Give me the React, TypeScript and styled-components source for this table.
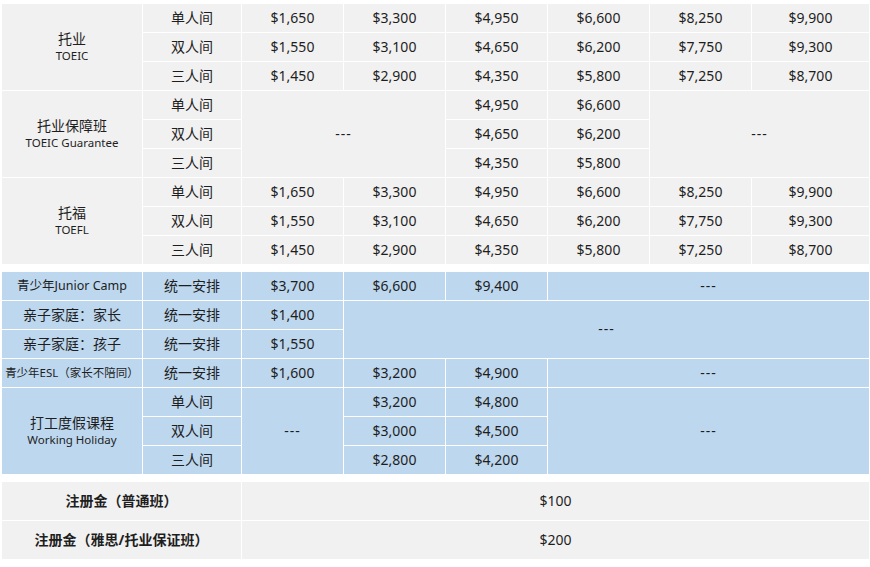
import React from "react";
import styled, { createGlobalStyle } from "styled-components";

const Global = createGlobalStyle`
  html, body { margin: 0; padding: 0; background: #ffffff; }
  body {
    font-family: "Segoe UI", "Noto Sans", "Noto Sans CJK SC", sans-serif;
    color: #1e1e1e;
  }
`;

const Page = styled.div`
  padding: 4px 1px 0 2px;
  display: flex;
  flex-direction: column;
  gap: 8px;
  width: 867px;
`;

const Table = styled.div<{ $cols: string; $rowH: number }>`
  display: grid;
  grid-template-columns: ${(p) => p.$cols};
  grid-auto-rows: ${(p) => p.$rowH}px;
  gap: 1px;
  background: #ffffff;
`;

type Tone = "gray" | "blue";

const Cell = styled.div<{ $tone: Tone; $cs?: number; $rs?: number; $bold?: boolean; $size?: number }>`
  grid-column: span ${(p) => p.$cs ?? 1};
  grid-row: span ${(p) => p.$rs ?? 1};
  background: ${(p) => (p.$tone === "gray" ? "#f1f1f1" : "#bdd7ee")};
  display: flex;
  flex-direction: column;
  align-items: center;
  justify-content: center;
  padding-bottom: 2px;
  text-align: center;
  font-size: ${(p) => p.$size ?? 14}px;
  font-weight: ${(p) => (p.$bold ? 700 : 400)};
  line-height: 17px;
  white-space: nowrap;
  font-family: "Segoe UI", "Noto Sans", "Noto Sans CJK SC", sans-serif;
`;

const Dashes = styled.span`
  letter-spacing: 1px;
`;

const Cn = styled.span`
  font-size: 14px;
  line-height: 18px;
`;

const En = styled.span`
  font-size: 11.5px;
  line-height: 15px;
`;

const rooms = ["单人间", "双人间", "三人间"];

const fullPrices = [
  ["$1,650", "$3,300", "$4,950", "$6,600", "$8,250", "$9,900"],
  ["$1,550", "$3,100", "$4,650", "$6,200", "$7,750", "$9,300"],
  ["$1,450", "$2,900", "$4,350", "$5,800", "$7,250", "$8,700"],
];

const guarantee = [
  ["$4,950", "$6,600"],
  ["$4,650", "$6,200"],
  ["$4,350", "$5,800"],
];

const holiday = [
  ["$3,200", "$4,800"],
  ["$3,000", "$4,500"],
  ["$2,800", "$4,200"],
];

const Label: React.FC<{ tone: Tone; cn: string; en: string }> = ({ tone, cn, en }) => (
  <Cell $tone={tone} $rs={3}>
    <Cn>{cn}</Cn>
    <En>{en}</En>
  </Cell>
);

const Empty: React.FC<{ tone: Tone; cs?: number; rs?: number }> = ({ tone, cs, rs }) => (
  <Cell $tone={tone} $cs={cs} $rs={rs}>
    <Dashes>---</Dashes>
  </Cell>
);

const FullGroup: React.FC<{ cn: string; en: string }> = ({ cn, en }) => (
  <>
    {rooms.map((room, i) => (
      <React.Fragment key={room}>
        {i === 0 && <Label tone="gray" cn={cn} en={en} />}
        <Cell $tone="gray">{room}</Cell>
        {fullPrices[i].map((p, j) => (
          <Cell $tone="gray" key={j}>
            {p}
          </Cell>
        ))}
      </React.Fragment>
    ))}
  </>
);

export default function App() {
  return (
    <>
      <Global />
      <Page>
        <Table $cols="140px 98px repeat(5, 101px) 117px" $rowH={28}>
          <FullGroup cn="托业" en="TOEIC" />
          {rooms.map((room, i) => (
            <React.Fragment key={room}>
              {i === 0 && <Label tone="gray" cn="托业保障班" en="TOEIC Guarantee" />}
              <Cell $tone="gray">{room}</Cell>
              {i === 0 && <Empty tone="gray" cs={2} rs={3} />}
              <Cell $tone="gray">{guarantee[i][0]}</Cell>
              <Cell $tone="gray">{guarantee[i][1]}</Cell>
              {i === 0 && <Empty tone="gray" cs={2} rs={3} />}
            </React.Fragment>
          ))}
          <FullGroup cn="托福" en="TOEFL" />
        </Table>

        <Table $cols="140px 98px repeat(5, 101px) 117px" $rowH={28}>
          <Cell $tone="blue" $size={12.5}>青少年Junior Camp</Cell>
          <Cell $tone="blue">统一安排</Cell>
          <Cell $tone="blue">$3,700</Cell>
          <Cell $tone="blue">$6,600</Cell>
          <Cell $tone="blue">$9,400</Cell>
          <Empty tone="blue" cs={3} />

          <Cell $tone="blue">亲子家庭：家长</Cell>
          <Cell $tone="blue">统一安排</Cell>
          <Cell $tone="blue">$1,400</Cell>
          <Empty tone="blue" cs={5} rs={2} />
          <Cell $tone="blue">亲子家庭：孩子</Cell>
          <Cell $tone="blue">统一安排</Cell>
          <Cell $tone="blue">$1,550</Cell>

          <Cell $tone="blue" $size={11.5}>青少年ESL（家长不陪同）</Cell>
          <Cell $tone="blue">统一安排</Cell>
          <Cell $tone="blue">$1,600</Cell>
          <Cell $tone="blue">$3,200</Cell>
          <Cell $tone="blue">$4,900</Cell>
          <Empty tone="blue" cs={3} />

          {rooms.map((room, i) => (
            <React.Fragment key={room}>
              {i === 0 && <Label tone="blue" cn="打工度假课程" en="Working Holiday" />}
              <Cell $tone="blue">{room}</Cell>
              {i === 0 && <Empty tone="blue" rs={3} />}
              <Cell $tone="blue">{holiday[i][0]}</Cell>
              <Cell $tone="blue">{holiday[i][1]}</Cell>
              {i === 0 && <Empty tone="blue" cs={3} rs={3} />}
            </React.Fragment>
          ))}
        </Table>

        <Table $cols="239px 627px" $rowH={38}>
          <Cell $tone="gray" $bold>注册金（普通班）</Cell>
          <Cell $tone="gray">$100</Cell>
          <Cell $tone="gray" $bold>注册金（雅思/托业保证班）</Cell>
          <Cell $tone="gray">$200</Cell>
        </Table>
      </Page>
    </>
  );
}
